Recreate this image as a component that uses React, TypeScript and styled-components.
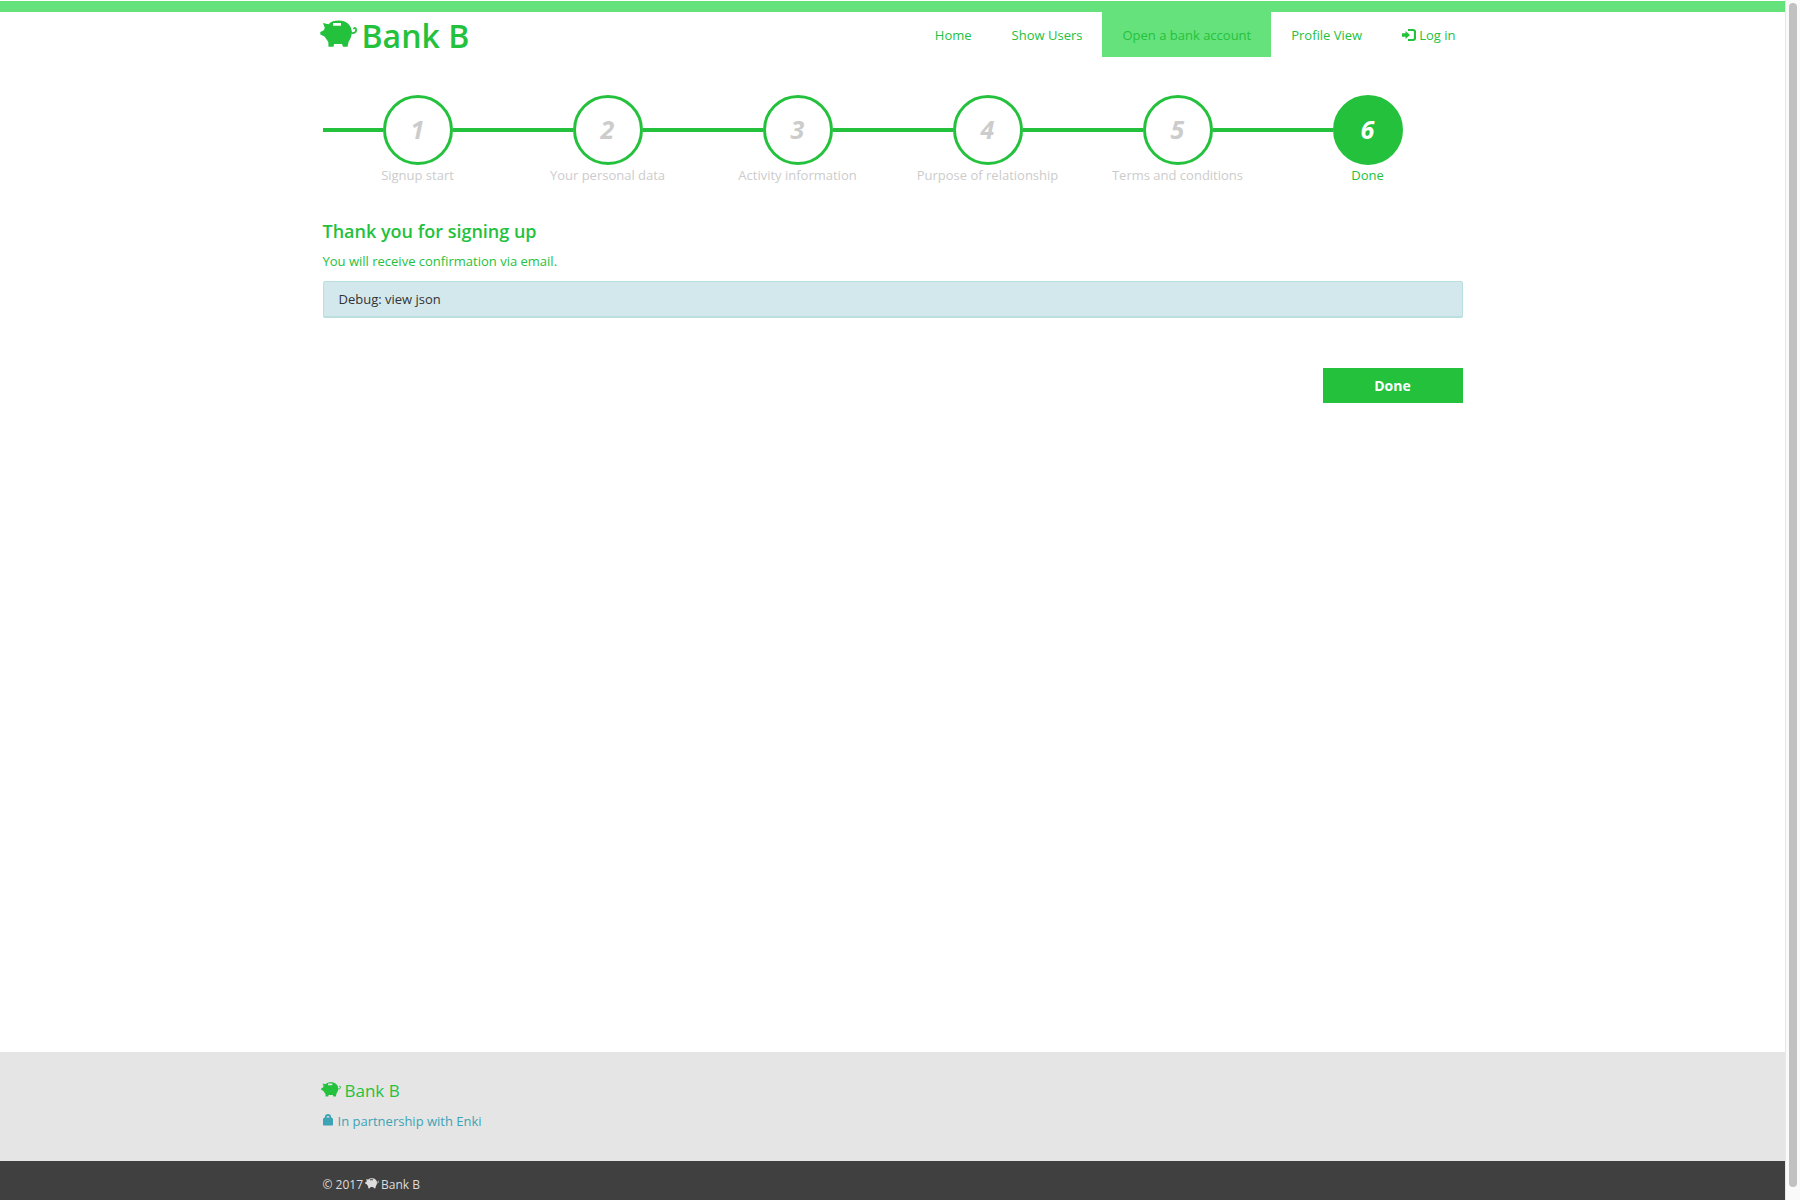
import React from "react";
import styled, { createGlobalStyle, css } from "styled-components";

const green = "#24c13d";
const lightGreen = "#66e27c";

const GlobalStyle = createGlobalStyle`
  *, *::before, *::after { box-sizing: border-box; }
  body {
    margin: 0;
    background: #fff;
    color: #333;
    font: 13px/20px "Open Sans", "Liberation Sans", sans-serif;
  }
  a { color: inherit; text-decoration: none; }
`;

const Shell = styled.div`
  display: flex;
  min-height: 100vh;
`;

const Page = styled.div`
  flex: 1;
  min-width: 0;
  display: flex;
  flex-direction: column;
`;

const ScrollTrack = styled.div`
  width: 15px;
  padding: 3px 3px 13px;
  display: flex;
  background: #fafafa;
  border-left: 1px solid #e7e7e7;
`;

const ScrollThumb = styled.div`
  flex: 1;
  border-radius: 4px;
  background: #c1c1c1;
`;

const Container = styled.div`
  width: 100%;
  max-width: 1170px;
  margin: 0 auto;
  padding: 0 15px;
`;

const Header = styled.header`
  margin-top: 1px;
  border-top: 11px solid ${lightGreen};
`;

const HeaderRow = styled(Container)`
  display: flex;
  justify-content: space-between;
  padding: 0 2px 0 12px;
`;

const Brand = styled.a`
  display: flex;
  align-items: center;
  gap: 5px;
  height: 45px;
  padding-top: 2px;
  color: ${green};
  font-size: 32px;
  font-weight: 600;
`;

const Nav = styled.nav`
  display: flex;
`;

const NavLink = styled.a<{ $active?: boolean }>`
  display: flex;
  align-items: center;
  gap: 3px;
  height: 45px;
  padding: 1px 20px 0;
  color: ${green};
  ${(p) => p.$active && css`background: ${lightGreen};`}
`;

const Main = styled.main`
  flex: 1;
  padding: 38px 0 60px;
`;

const Steps = styled.ol`
  display: grid;
  grid-template-columns: repeat(6, 1fr);
  margin: 0 0 36px;
  padding: 0;
  list-style: none;
`;

const Step = styled.li<{ $current?: boolean }>`
  display: flex;
  flex-direction: column;
  color: ${(p) => (p.$current ? green : "#ccc")};
  text-align: center;
`;

const Track = styled.div`
  display: flex;
  align-items: center;
`;

const Line = styled.span<{ $hidden?: boolean }>`
  flex: 1;
  height: 4px;
  background: ${(p) => (p.$hidden ? "transparent" : green)};
`;

const Circle = styled.span<{ $current?: boolean }>`
  display: flex;
  align-items: center;
  justify-content: center;
  width: 70px;
  height: 70px;
  padding-bottom: 2px;
  border: 3px solid ${green};
  border-radius: 50%;
  background: ${(p) => (p.$current ? green : "#fff")};
  color: ${(p) => (p.$current ? "#fff" : "#ccc")};
  font-size: 25px;
  font-style: italic;
  font-weight: 700;
`;

const Title = styled.h1`
  margin: 0 0 10px;
  color: ${green};
  font-size: 18px;
  font-weight: 600;
  line-height: 20px;
`;

const Lead = styled.p`
  margin: 0 0 10px;
  color: ${green};
`;

const DebugPanel = styled.div`
  padding: 7px 15px;
  border: 1px solid #b9e0df;
  border-bottom-width: 2px;
  border-radius: 2px;
  background: #d3e8ed;
`;

const Actions = styled.div`
  display: flex;
  justify-content: flex-end;
  margin-top: 50px;
`;

const Button = styled.button`
  width: 140px;
  height: 35px;
  border: 0;
  background: ${green};
  color: #fff;
  font: 700 14px/20px "Open Sans", "Liberation Sans", sans-serif;
  cursor: pointer;
`;

const Partner = styled.section`
  padding: 29px 0 30px;
  background: #e5e5e5;
`;

const PartnerBrand = styled.a`
  display: flex;
  align-items: center;
  gap: 4px;
  margin: 0 0 10px -2px;
  color: ${green};
  font-size: 17px;
`;

const PartnerLink = styled.a`
  display: flex;
  align-items: center;
  gap: 5px;
  color: #3ca3b5;
`;

const Legal = styled.section`
  padding: 14px 0 5px;
  background: #404040;
  color: #ddd;
  font-size: 12px;
`;

const LegalRow = styled.div`
  display: flex;
  align-items: center;
  gap: 2px;
`;

const PiggySvg = styled.svg`
  margin-bottom: 3px;
`;

const LockSvg = styled.svg`
  margin-bottom: 3px;
`;

const Piggy = ({ width }: { width: number }) => (
  <PiggySvg width={width} viewBox="0 0 37 28" fill="currentColor" aria-hidden="true">
    <path
      fillRule="evenodd"
      d="M3 3 L8.5 4.2 C11 1.5 14 .5 19 .5 C26 .5 31.5 5 31.8 11.5 C31.8 16 30.5 19 28.7 21.5 L27.5 26.8 L23 26.8 L22 24 L14 24 L13.5 26.8 L8.5 26.8 L8.3 22 C7 20 5.5 18 4.5 16.5 L.3 14.5 L.3 12 L3.8 10.2 L4.8 7.8 Z M13 3 L13 5.8 L21 5.8 L21 3 Z"
    />
    <path
      d="M30.5 11.5 C31.5 14 36.4 13.5 36.1 9.5 C36 7.3 33.8 7.3 33.8 9.3"
      fill="none"
      stroke="currentColor"
      strokeWidth="1.7"
    />
  </PiggySvg>
);

const LoginIcon = () => (
  <svg width="14" height="14" viewBox="0 0 14 14" fill="none" stroke="currentColor" aria-hidden="true">
    <path d="M6 2 H11 Q13 2 13 4 V10 Q13 12 11 12 H6" strokeWidth="2.2" />
    <path d="M0 5.3 H3.5 V3 L8 7 L3.5 11 V8.7 H0 Z" fill="currentColor" stroke="none" />
  </svg>
);

const LockIcon = () => (
  <LockSvg width="10" height="12" viewBox="0 0 10 12" aria-hidden="true">
    <path d="M2.8 5 V3 Q3 1 5 1 Q7 1 7.2 3 V5" fill="none" stroke="currentColor" strokeWidth="1.8" />
    <path d="M1.2 3.5 H8.8 L10 5 V11 L9.5 11.5 H.5 L0 11 V5 Z" fill="currentColor" />
  </LockSvg>
);

const steps = [
  "Signup start",
  "Your personal data",
  "Activity information",
  "Purpose of relationship",
  "Terms and conditions",
  "Done",
];

export default function App() {
  return (
    <>
      <GlobalStyle />
      <Shell>
        <Page>
          <Header>
            <HeaderRow>
              <Brand href="#"><Piggy width={37} />Bank B</Brand>
              <Nav>
                <NavLink href="#">Home</NavLink>
                <NavLink href="#">Show Users</NavLink>
                <NavLink href="#" $active>Open a bank account</NavLink>
                <NavLink href="#">Profile View</NavLink>
                <NavLink href="#"><LoginIcon />Log in</NavLink>
              </Nav>
            </HeaderRow>
          </Header>
          <Main>
            <Container>
              <Steps>
                {steps.map((label, i) => {
                  const current = i === steps.length - 1;
                  return (
                    <Step key={label} $current={current}>
                      <Track>
                        <Line />
                        <Circle $current={current}>{i + 1}</Circle>
                        <Line $hidden={current} />
                      </Track>
                      {label}
                    </Step>
                  );
                })}
              </Steps>
              <Title>Thank you for signing up</Title>
              <Lead>You will receive confirmation via email.</Lead>
              <DebugPanel>Debug: view json</DebugPanel>
              <Actions><Button type="button">Done</Button></Actions>
            </Container>
          </Main>
          <footer>
            <Partner>
              <Container>
                <PartnerBrand href="#"><Piggy width={20} />Bank B</PartnerBrand>
                <PartnerLink href="#"><LockIcon />In partnership with Enki</PartnerLink>
              </Container>
            </Partner>
            <Legal>
              <Container>
                <LegalRow>© 2017 <Piggy width={14} /> Bank B</LegalRow>
              </Container>
            </Legal>
          </footer>
        </Page>
        <ScrollTrack aria-hidden="true"><ScrollThumb /></ScrollTrack>
      </Shell>
    </>
  );
}
